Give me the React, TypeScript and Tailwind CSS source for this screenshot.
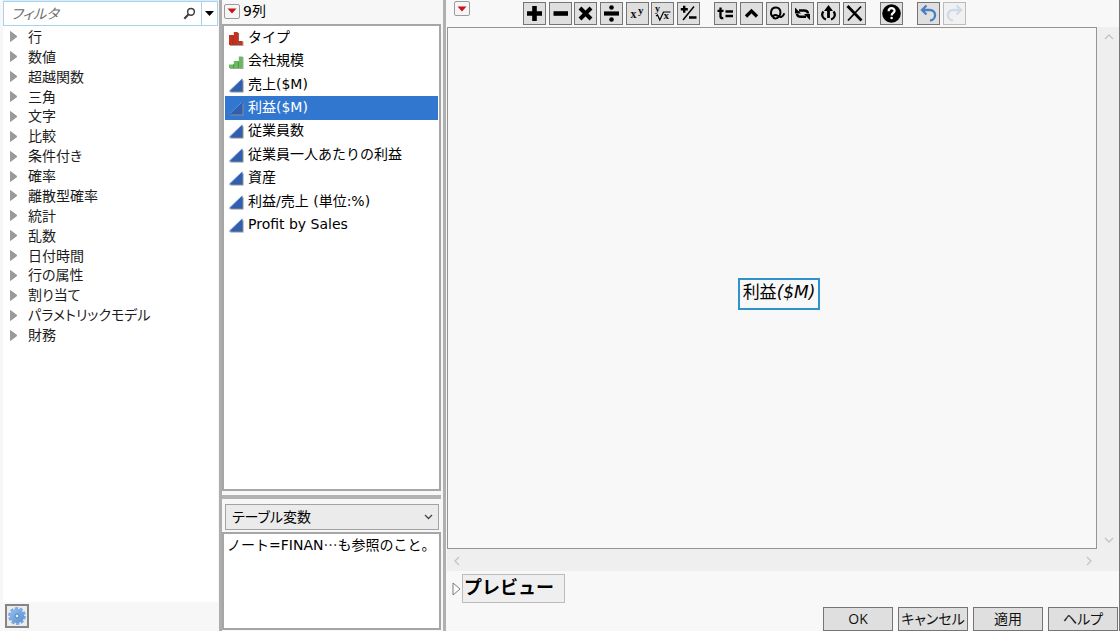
import { useState } from "react";
import type { ReactNode } from "react";

const JP_FONT = "font-['DejaVu_Sans','Noto_Sans_CJK_JP',sans-serif]";
const UI_FONT = "font-['Open_Sans','Noto_Sans_CJK_JP',sans-serif] [font-feature-settings:'palt']";

const functionGroups = [
  "行", "数値", "超越関数", "三角", "文字", "比較", "条件付き", "確率",
  "離散型確率", "統計", "乱数", "日付時間", "行の属性", "割り当て",
  "パラメトリックモデル", "財務",
];

type Kind = "nominal" | "ordinal" | "continuous";

const columns: { name: string; kind: Kind }[] = [
  { name: "タイプ", kind: "nominal" },
  { name: "会社規模", kind: "ordinal" },
  { name: "売上($M)", kind: "continuous" },
  { name: "利益($M)", kind: "continuous" },
  { name: "従業員数", kind: "continuous" },
  { name: "従業員一人あたりの利益", kind: "continuous" },
  { name: "資産", kind: "continuous" },
  { name: "利益/売上 (単位:%)", kind: "continuous" },
  { name: "Profit by Sales", kind: "continuous" },
];

function KindIcon({ kind }: { kind: Kind }) {
  if (kind === "nominal") {
    return (
      <svg width="15" height="15" viewBox="0 0 15 15" aria-hidden="true">
        <path d="M1 5h4V2h4.800v8.500H14.500v4.500H1z" fill="#a9a39f" />
        <path d="M0 4h4v10H0zM4.800 1H8.800v13H4.800zM9.800 10H13.500v4H9.800z" fill="#c9301c" />
        <path d="M4.300 4v10M9.200 2v12" stroke="#8f2013" strokeWidth="0.9" />
      </svg>
    );
  }
  if (kind === "ordinal") {
    return (
      <svg width="15" height="15" viewBox="0 0 15 15" aria-hidden="true">
        <path d="M1 11h4V8h5V3h4.500v12H1z" fill="#a4a4a4" />
        <path d="M0 10.500h4.300V14H0zM4.800 7h4.300v7H4.800zM9.800 2.500H13.500V14H9.800z" fill="#66bb5c" />
        <path d="M4.500 10v4M9.400 7v7" stroke="#3f9139" strokeWidth="0.8" />
      </svg>
    );
  }
  return (
    <svg width="15" height="15" viewBox="0 0 15 15" aria-hidden="true">
      <path d="M1 14.500h13.500V2z" fill="#8d8d8d" />
      <path d="M0 13.500L13.500 0.500v13z" fill="#315fae" />
      <path d="M0.500 13L13 1" stroke="#5b8fe0" strokeWidth="1" />
    </svg>
  );
}

function RedTriangleButton({ label }: { label: string }) {
  return (
    <button
      type="button"
      aria-label={label}
      className="flex h-[15px] w-4 shrink-0 items-center justify-center rounded-[2px] border border-[#9b9b9b] bg-[#f6f6f6]"
    >
      <svg width="10" height="6" viewBox="0 0 10 6" aria-hidden="true">
        <path d="M0.500 0.500h9L5 5.500z" fill="#c8141c" />
      </svg>
    </button>
  );
}

function ToolButton({ label, disabled, children }: { label: string; disabled?: boolean; children: ReactNode }) {
  return (
    <button
      type="button"
      aria-label={label}
      title={label}
      disabled={disabled}
      className={
        disabled
          ? "flex size-[23px] items-center justify-center border border-[#bcbcbc] bg-[#f1f1f1]"
          : "flex size-[23px] items-center justify-center border border-[#757575] bg-[#dfdfdf]"
      }
    >
      <svg width="21" height="21" viewBox="0 0 21 21" fill="none" stroke="#000" className="overflow-visible" aria-hidden="true">
        {children}
      </svg>
    </button>
  );
}

function Chevron({ d, label }: { d: string; label: string }) {
  return (
    <button type="button" aria-label={label} className="flex size-5 items-center justify-center">
      <svg width="12" height="12" viewBox="0 0 12 12" fill="none" stroke="#c4c4c4" strokeWidth="1.300" aria-hidden="true">
        <path d={d} />
      </svg>
    </button>
  );
}

function FunctionPanel() {
  return (
    <section className="flex w-[219px] shrink-0 flex-col bg-[#f7f7f7] pl-[3px] pr-px">
      <div className="h-px bg-[#d9edf9]" />
      <div className="flex h-[25px] shrink-0 items-stretch border border-[#a6d3ee] bg-white">
        <input
          type="text"
          aria-label="フィルタ"
          placeholder="フィルタ"
          className={`min-w-0 flex-1 bg-transparent pl-[7px] text-sm outline-none placeholder:italic placeholder:text-[#6c6c6c] ${UI_FONT}`}
        />
        <button type="button" aria-label="検索" className="flex w-6 items-center justify-center">
          <svg width="13" height="13" viewBox="0 0 13 13" fill="none" stroke="#3f3f3f" aria-hidden="true">
            <circle cx="8" cy="4.800" r="3.400" strokeWidth="1.500" />
            <path d="M5.600 7.300L1.300 11.700" strokeWidth="2.100" />
          </svg>
        </button>
        <button type="button" aria-label="フィルタのオプション" className="flex w-4 items-center justify-center border-l border-[#a6d3ee]">
          <svg width="9" height="5" viewBox="0 0 9 5" aria-hidden="true">
            <path d="M0 0h9L4.500 5z" fill="#000" />
          </svg>
        </button>
      </div>
      <div className="flex-1 bg-white pt-px">
        <ul className="grid h-[318px] auto-rows-fr">
          {functionGroups.map((name) => (
            <li key={name} className="flex min-h-0">
              <button
                type="button"
                aria-expanded="false"
                className={`flex w-full items-center gap-2.5 pl-[7px] text-left text-sm leading-4 text-[#1c1c1c] ${UI_FONT}`}
              >
                <svg width="8" height="11" viewBox="0 0 8 11" className="shrink-0" aria-hidden="true">
                  <path d="M0.500 0.500L7 5.500L0.500 10.500z" fill="#9a9a9a" stroke="#858585" strokeWidth="0.7" />
                </svg>
                {name}
              </button>
            </li>
          ))}
        </ul>
      </div>
      <div className="flex h-[29px] shrink-0 items-start pl-[2px] pt-[2px]">
        <button type="button" aria-label="設定" className="flex size-6 items-center justify-center border-2 border-[#858585] bg-[#ececec]">
          <svg width="20" height="20" viewBox="0 0 20 20" aria-hidden="true">
            <defs>
              <linearGradient id="gear" x1="0" y1="0" x2="1" y2="1">
                <stop offset="0" stopColor="#93bff0" />
                <stop offset="1" stopColor="#5a8fd2" />
              </linearGradient>
            </defs>
            <circle cx="10" cy="10" r="7.600" fill="none" stroke="#78a9e2" strokeWidth="2.600" strokeDasharray="3.200 1.575" />
            <circle cx="10" cy="10" r="7.200" fill="url(#gear)" />
            <circle cx="10" cy="10" r="2" fill="#e4ecf5" stroke="#4377b8" strokeWidth="0.9" />
          </svg>
        </button>
      </div>
    </section>
  );
}

function ColumnPanel() {
  const [selected, setSelected] = useState("利益($M)");
  return (
    <section className="flex w-[219px] shrink-0 flex-col bg-[#f7f7f7]">
      <header className={`flex h-6 shrink-0 items-center gap-[3px] pb-[2px] pl-[2px] text-sm leading-5 text-black ${JP_FONT}`}>
        <RedTriangleButton label="列のメニュー" />
        <h2>9列</h2>
      </header>
      <div className="min-h-0 flex-1 border-2 border-[#a6a6a6] bg-white px-px">
        <ul role="listbox" aria-label="列" className="grid h-[211px] auto-rows-fr">
          {columns.map(({ name, kind }) => (
            <li key={name} role="option" aria-selected={name === selected} className="flex min-h-0">
              <button
                type="button"
                onClick={() => setSelected(name)}
                className={`flex w-full items-center gap-1 pb-[2px] pl-1 text-left text-sm leading-5 ${JP_FONT} ${
                  name === selected ? "bg-[#3177cf] text-white" : "text-black"
                }`}
              >
                <span className="shrink-0 pt-[3px]">
                  <KindIcon kind={kind} />
                </span>
                <span>{name}</span>
              </button>
            </li>
          ))}
        </ul>
      </div>
      <div className="mt-1 h-1 shrink-0 bg-[#b2b2b2]" />
      <div className="relative ml-[3px] mr-[2px] mb-[2px] mt-[5px] shrink-0">
        <select
          aria-label="表示する変数"
          className={`h-[26px] w-full appearance-none border border-[#a3a3a3] bg-[#ebebeb] pl-1.5 text-sm text-black outline-none ${UI_FONT}`}
        >
          <option>テーブル変数</option>
        </select>
        <svg width="9" height="6" viewBox="0 0 9 6" fill="none" stroke="#444" strokeWidth="1.300" className="pointer-events-none absolute right-1.5 top-2.5" aria-hidden="true">
          <path d="M1 1l3.500 3.500L8 1" />
        </svg>
      </div>
      <div className={`mb-px h-[98px] shrink-0 border-2 border-[#a6a6a6] bg-white pl-[3px] text-sm leading-5 text-black ${JP_FONT}`}>
        <p className="whitespace-nowrap">
          ノート=FINAN<span lang="ja" className="font-['Noto_Sans_CJK_JP',sans-serif]">…</span>も参照のこと。
        </p>
      </div>
    </section>
  );
}

function Toolbar() {
  return (
    <div className="flex h-[27px] shrink-0 items-start pl-[7px] pt-px">
      <RedTriangleButton label="計算式のメニュー" />
      <div role="toolbar" aria-label="計算式エディタ" className="ml-[53px] flex gap-3.5 pt-px">
        <div className="flex w-[177px] justify-between">
          <ToolButton label="加算"><path d="M10.500 3v15M3 10.500h15" strokeWidth="4.600" /></ToolButton>
          <ToolButton label="減算"><path d="M3.500 10.500h14.500" strokeWidth="4.600" /></ToolButton>
          <ToolButton label="乗算"><path d="M5 5l11 11M16 5L5 16" strokeWidth="4" /></ToolButton>
          <ToolButton label="除算">
            <path d="M3 10.500h15" strokeWidth="4.200" />
            <circle cx="10.500" cy="4.500" r="2.300" fill="#000" stroke="none" />
            <circle cx="10.500" cy="16.500" r="2.300" fill="#000" stroke="none" />
          </ToolButton>
          <ToolButton label="べき乗">
            <g fill="#111" stroke="none" fontFamily="Liberation Serif, serif" fontWeight="bold">
              <text x="3.500" y="15" fontSize="12">x</text>
              <text x="11" y="11" fontSize="11">y</text>
            </g>
          </ToolButton>
          <ToolButton label="べき根">
            <g fill="#111" stroke="none" fontFamily="Liberation Serif, serif" fontWeight="bold">
              <text x="3" y="9" fontSize="10">y</text>
              <text x="11.500" y="16" fontSize="11">x</text>
            </g>
            <path d="M4 13l1.500-1 2.300 5L11.500 9h7" strokeWidth="1.200" />
          </ToolButton>
          <ToolButton label="符号の変更">
            <path d="M6.200 2.800v7M2.800 6.300h7M11 14.500h7.500" strokeWidth="2.400" />
            <path d="M16 3.500L5 17" strokeWidth="1.500" />
          </ToolButton>
        </div>
        <div className="flex w-[152px] justify-between">
          <ToolButton label="ローカル変数">
            <path d="M5.500 4.500v9q0 2 2.800 1.500M2.500 7.800h6" strokeWidth="2.300" />
            <path d="M10.500 8.500h7.500M10.500 13h7.500" strokeWidth="2.300" />
          </ToolButton>
          <ToolButton label="挿入"><path d="M5 13.500l5.500-5.500 5.500 5.500" strokeWidth="3.300" /></ToolButton>
          <ToolButton label="囲む">
            <path d="M6.500 14C2.800 12.500 3 4.500 9 4.500c6.500 0 5.500 10.500-.5 11-3 0-3-3.500-.2-3.500 2.500 0 3.800 2.700 6 2 1.700-.6 2.500-2 3-3.800" strokeWidth="2" />
          </ToolButton>
          <ToolButton label="入れ替え">
            <path d="M7 7.500h5c2.500 0 3.800.8 4 3M14 13.800H9c-2.500 0-3.800-.8-4-3" strokeWidth="2.400" />
            <path d="M3 4.500v6h6zM18 17v-6h-6z" fill="#000" stroke="none" />
          </ToolButton>
          <ToolButton label="取り出す">
            <path d="M10.500 15V7" strokeWidth="2.800" />
            <path d="M10.500 2L6 8h9z" fill="#000" stroke="none" />
            <path d="M5.500 8.500C2.800 11.500 4.500 15.500 8 16.500M15.500 8.500c2.700 3 1 7-2.500 8" strokeWidth="2.200" />
          </ToolButton>
          <ToolButton label="削除">
            <path d="M3.500 3l14 14.500" strokeWidth="2.800" />
            <path d="M17 3.500L4 17.500" strokeWidth="1.800" />
          </ToolButton>
        </div>
        <ToolButton label="ヘルプ">
          <circle cx="10.500" cy="10.500" r="9.300" fill="#000" stroke="none" />
          <path d="M7.600 8.300c0-4.200 6-4 6-.6 0 2.200-2.900 2.200-2.900 4.700" stroke="#fff" strokeWidth="2.200" />
          <circle cx="10.600" cy="15" r="1.300" fill="#fff" stroke="none" />
        </ToolButton>
        <div className="flex gap-[3px]">
          <ToolButton label="元に戻す">
            <path d="M8.500 2.500L4 7l4.500 4.500M4.500 7h7.300c7 0 7 9.800.2 10.700" stroke="#4a7fc3" strokeWidth="2.300" />
          </ToolButton>
          <ToolButton label="やり直し" disabled>
            <path d="M12.500 2.500L17 7l-4.500 4.500M16.500 7H9.200c-7 0-7 9.800-.2 10.700" stroke="#cddae9" strokeWidth="2.300" />
          </ToolButton>
        </div>
      </div>
    </div>
  );
}

export default function App() {
  return (
    <main className="flex h-screen min-h-[560px] w-full overflow-hidden border-r border-[#777777] bg-[#f7f7f7]">
      <FunctionPanel />
      <div className="w-[3px] shrink-0 bg-[#adadad]" />
      <ColumnPanel />
      <div className="ml-[2px] mr-px w-[3px] shrink-0 bg-[#b0b0b0]" />
      <section className="flex min-w-0 flex-1 flex-col bg-[#f8f8f8]">
        <Toolbar />
        <div className="flex min-h-0 flex-1">
          <div className="flex min-w-0 flex-1 items-center justify-center border border-[#96968e] bg-[#f8f8f8] pl-3.5 pt-3">
            <button type="button" className={`h-8 border-2 border-[#2e93cd] px-[3px] pb-1 text-[17px] leading-6 text-black ${JP_FONT}`}>
              利益<i>($M)</i>
            </button>
          </div>
          <div className="flex w-[22px] shrink-0 flex-col items-end justify-between bg-[#efefef]">
            <Chevron label="上へスクロール" d="M2 8l4-4 4 4" />
            <Chevron label="下へスクロール" d="M2 5l4 4 4-4" />
          </div>
        </div>
        <div className="flex h-[22px] shrink-0 items-center justify-between bg-[#efefef] pr-5 pt-[2px]">
          <Chevron label="左へスクロール" d="M8 2L4 6l4 4" />
          <Chevron label="右へスクロール" d="M4 2l4 4-4 4" />
        </div>
        <div className="flex h-9 shrink-0 items-start pl-[5px] pt-[3px]">
          <button type="button" aria-expanded="false" className="flex items-center gap-px">
            <svg width="9" height="14" viewBox="0 0 9 14" fill="#fff" stroke="#7c7c7c" aria-hidden="true">
              <path d="M1 1l7 6-7 6z" />
            </svg>
            <span className="flex h-[29px] w-[103px] items-start border border-[#bcbcbc] bg-[#efefef] pl-px font-['Noto_Sans_CJK_JP',sans-serif] text-lg font-bold leading-[22px] text-black">
              プレビュー
            </span>
          </button>
        </div>
        <div className={`flex shrink-0 justify-end gap-[5px] pr-px text-sm leading-5 text-[#111] ${UI_FONT}`}>
          {["OK", "キャンセル", "適用", "ヘルプ"].map((label) => (
            <button key={label} type="button" className="h-6 w-[70px] border border-[#757575] bg-[#dfdfdf]">
              {label}
            </button>
          ))}
        </div>
      </section>
    </main>
  );
}
